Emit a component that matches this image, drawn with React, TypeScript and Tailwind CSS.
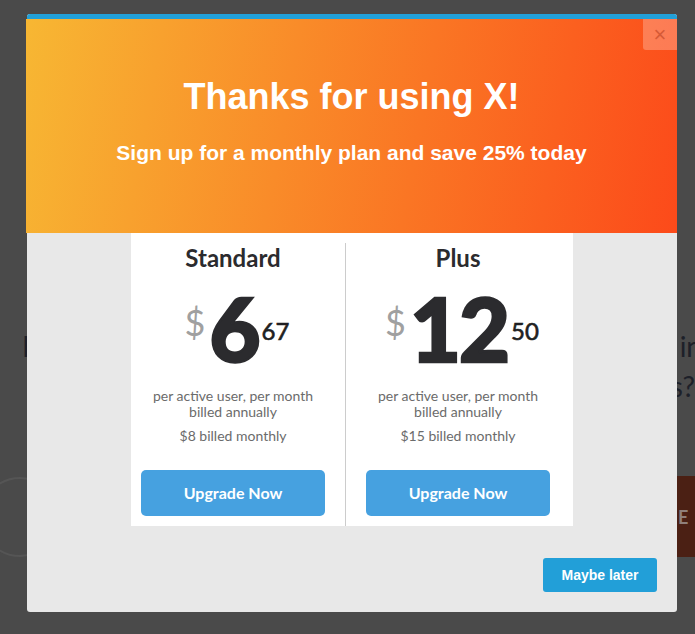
import React from 'react';

const PLANS = [
  { name: 'Standard', whole: '6', cents: '67', monthly: '$8 billed monthly' },
  { name: 'Plus', whole: '12', cents: '50', monthly: '$15 billed monthly' },
];

function PlanColumn({ plan, className }: { plan: (typeof PLANS)[number]; className: string }) {
  return (
    <div className={`flex flex-col items-center pb-[10px] ${className}`}>
      <h3 className="text-[24px] font-bold leading-[30px] text-[#2b2b2e]">{plan.name}</h3>
      <div className="mt-[10px] flex h-[90px] items-start justify-center pl-[8px]">
        <span className="mr-[4px] mt-[21px] text-[36px] font-normal leading-[36px] text-[#a0a0a0]">$</span>
        <span className="text-[88px] font-black leading-[90px] tracking-[-2px] text-[#2b2b2e] [-webkit-text-stroke:2.5px_#2b2b2e]">
          {plan.whole}
        </span>
        <span className="ml-[3px] mt-[36px] text-[24px] font-normal leading-[24px] text-[#1f1f22] [-webkit-text-stroke:0.6px_#1f1f22]">
          {plan.cents}
        </span>
      </div>
      <p className="mt-[15px] text-center text-[14px] leading-[16px] text-[#6b6b6b]">
        per active user, per month
        <br />
        billed annually
      </p>
      <p className="mt-[8px] text-[14px] leading-[16px] text-[#6b6b6b]">{plan.monthly}</p>
      <button
        type="button"
        className="mt-[26px] h-[46px] w-[184px] rounded-[5px] bg-[#46a1e0] text-[16px] font-bold text-white"
      >
        Upgrade Now
      </button>
    </div>
  );
}

export default function App() {
  return (
    <div className="relative h-[634px] w-[695px] overflow-hidden bg-[#4a4a4a] font-['Lato',sans-serif]">
      {/* dimmed page behind the modal */}
      <div className="flex flex-col pt-[326px] text-[28px] leading-[40px] text-[#1d2029]">
        <div className="flex w-[702px] justify-between pl-[22px]">
          <span>How would you</span>
          <span>in</span>
        </div>
        <div className="flex justify-end">
          <span>settings?</span>
        </div>
        <div className="mt-[70px] flex items-center justify-between">
          <div className="-ml-[20px] h-[80px] w-[80px] rounded-full border-2 border-[#555]" />
          <div className="-mr-[42px] flex h-[81px] w-[60px] items-center bg-[#4b2014] pl-[1px] text-[18px] font-bold text-[#8f807b]">
            E
          </div>
        </div>
      </div>

      {/* modal */}
      <div className="absolute left-[27px] top-[14px] flex h-[598px] w-[650px] flex-col rounded-[3px] bg-[#e8e8e8]">
        <div className="h-[5px] rounded-t-[3px] bg-[#22a0d8]" />
        <div className="relative -ml-[1px] flex h-[214px] flex-col items-center bg-[linear-gradient(100deg,#f7b733,#fc4a1a)] pt-[58px] font-['Liberation_Sans',Arial,sans-serif] font-bold text-white">
          <h1 className="text-[36px] leading-[40px]">Thanks for using X!</h1>
          <p className="mt-[24px] text-[21px] leading-[24px]">
            Sign up for a monthly plan and save 25% today
          </p>
          <button
            type="button"
            className="absolute right-0 top-0 flex h-[31px] w-[34px] items-center justify-center rounded-bl-[3px] bg-white/25 text-[22px] font-normal leading-none text-[#d65a36]"
          >
            ×
          </button>
        </div>

        <div className="mx-auto flex w-[442px] bg-white pt-[10px]">
          <PlanColumn plan={PLANS[0]} className="w-[214px] pl-[10px] pr-[20px]" />
          <PlanColumn plan={PLANS[1]} className="w-[228px] border-l border-[#cccccc] pl-[20px] pr-[23px]" />
        </div>

        <div className="mt-auto flex justify-end px-[20px] pb-[20px]">
          <button
            type="button"
            className="h-[34px] w-[114px] rounded-[3px] bg-[#229fd8] font-['Liberation_Sans',Arial,sans-serif] text-[14px] font-bold text-white"
          >
            Maybe later
          </button>
        </div>
      </div>
    </div>
  );
}
